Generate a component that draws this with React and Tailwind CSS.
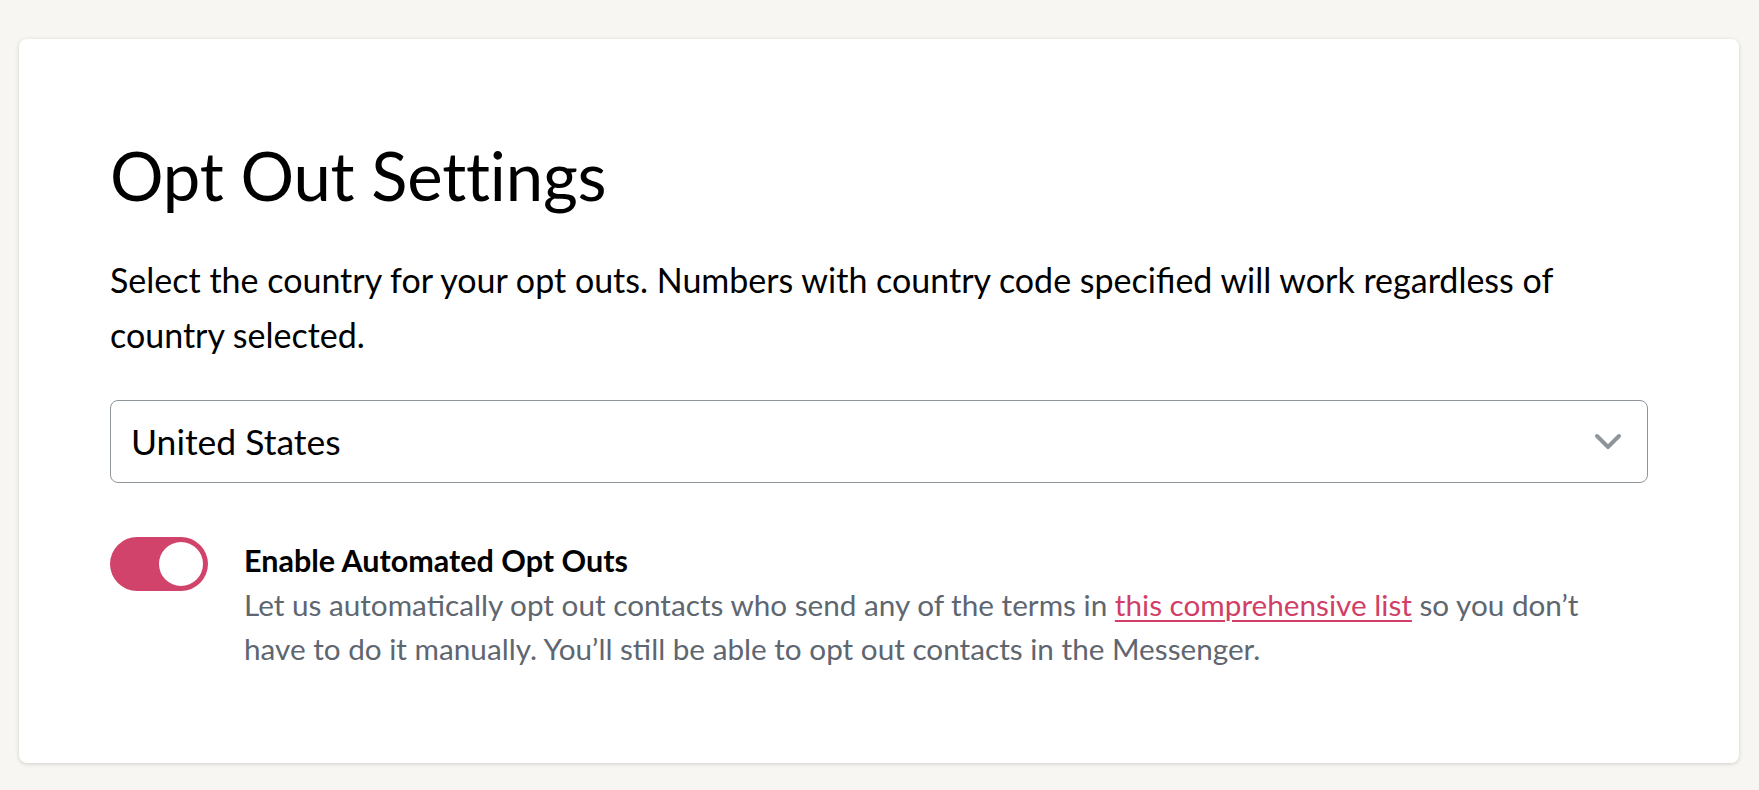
import React from "react";

function Chevron() {
  return (
    <svg width="28" height="18" viewBox="0 0 28 18" fill="none" className="shrink-0">
      <polyline points="3,3 14,14 25,3" stroke="#8e959b" strokeWidth="4" strokeLinecap="round" strokeLinejoin="round" fill="none" />
    </svg>
  );
}

export default function App() {
  return (
    <div className="min-h-[790px] w-full bg-[#f7f6f3] pl-[19px] pr-[20px] pt-[39px] font-[Lato,sans-serif] text-black">
      <div className="rounded-[8px] bg-white px-[91px] pt-[103px] pb-[92px] shadow-[0_1px_4px_rgba(0,0,0,0.16)]">
        <h1 className="text-[67px] leading-[67px] font-normal tracking-[-0.2px]">Opt Out Settings</h1>
        <p className="mt-[43px] text-[34px] leading-[55px]">
          Select the country for your opt outs. Numbers with country code specified will work regardless of
          <br />
          country selected.
        </p>
        <div className="mt-[38px] flex h-[83px] items-center justify-between rounded-[8px] border-[1.5px] border-[#8e959b] pl-[20px] pr-[25px]">
          <span className="text-[35.5px] leading-[42px]">United States</span>
          <Chevron />
        </div>
        <div className="mt-[54px] flex items-start gap-[36px]">
          <div className="flex h-[54px] w-[98px] shrink-0 items-center justify-end rounded-full bg-[#d1436a] p-[5px]">
            <div className="h-[44px] w-[44px] rounded-full bg-white" />
          </div>
          <div>
            <div className="text-[30.5px] font-bold leading-[46px]">Enable Automated Opt Outs</div>
            <p className="text-[29.7px] leading-[44px] text-[#5e6670]">
              Let us automatically opt out contacts who send any of the terms in{" "}
              <a href="#" className="text-[#d13f66] underline decoration-[2px] underline-offset-[4px]">
                this comprehensive list
              </a>{" "}
              so you don’t
              <br />
              have to do it manually. You’ll still be able to opt out contacts in the Messenger.
            </p>
          </div>
        </div>
      </div>
    </div>
  );
}
